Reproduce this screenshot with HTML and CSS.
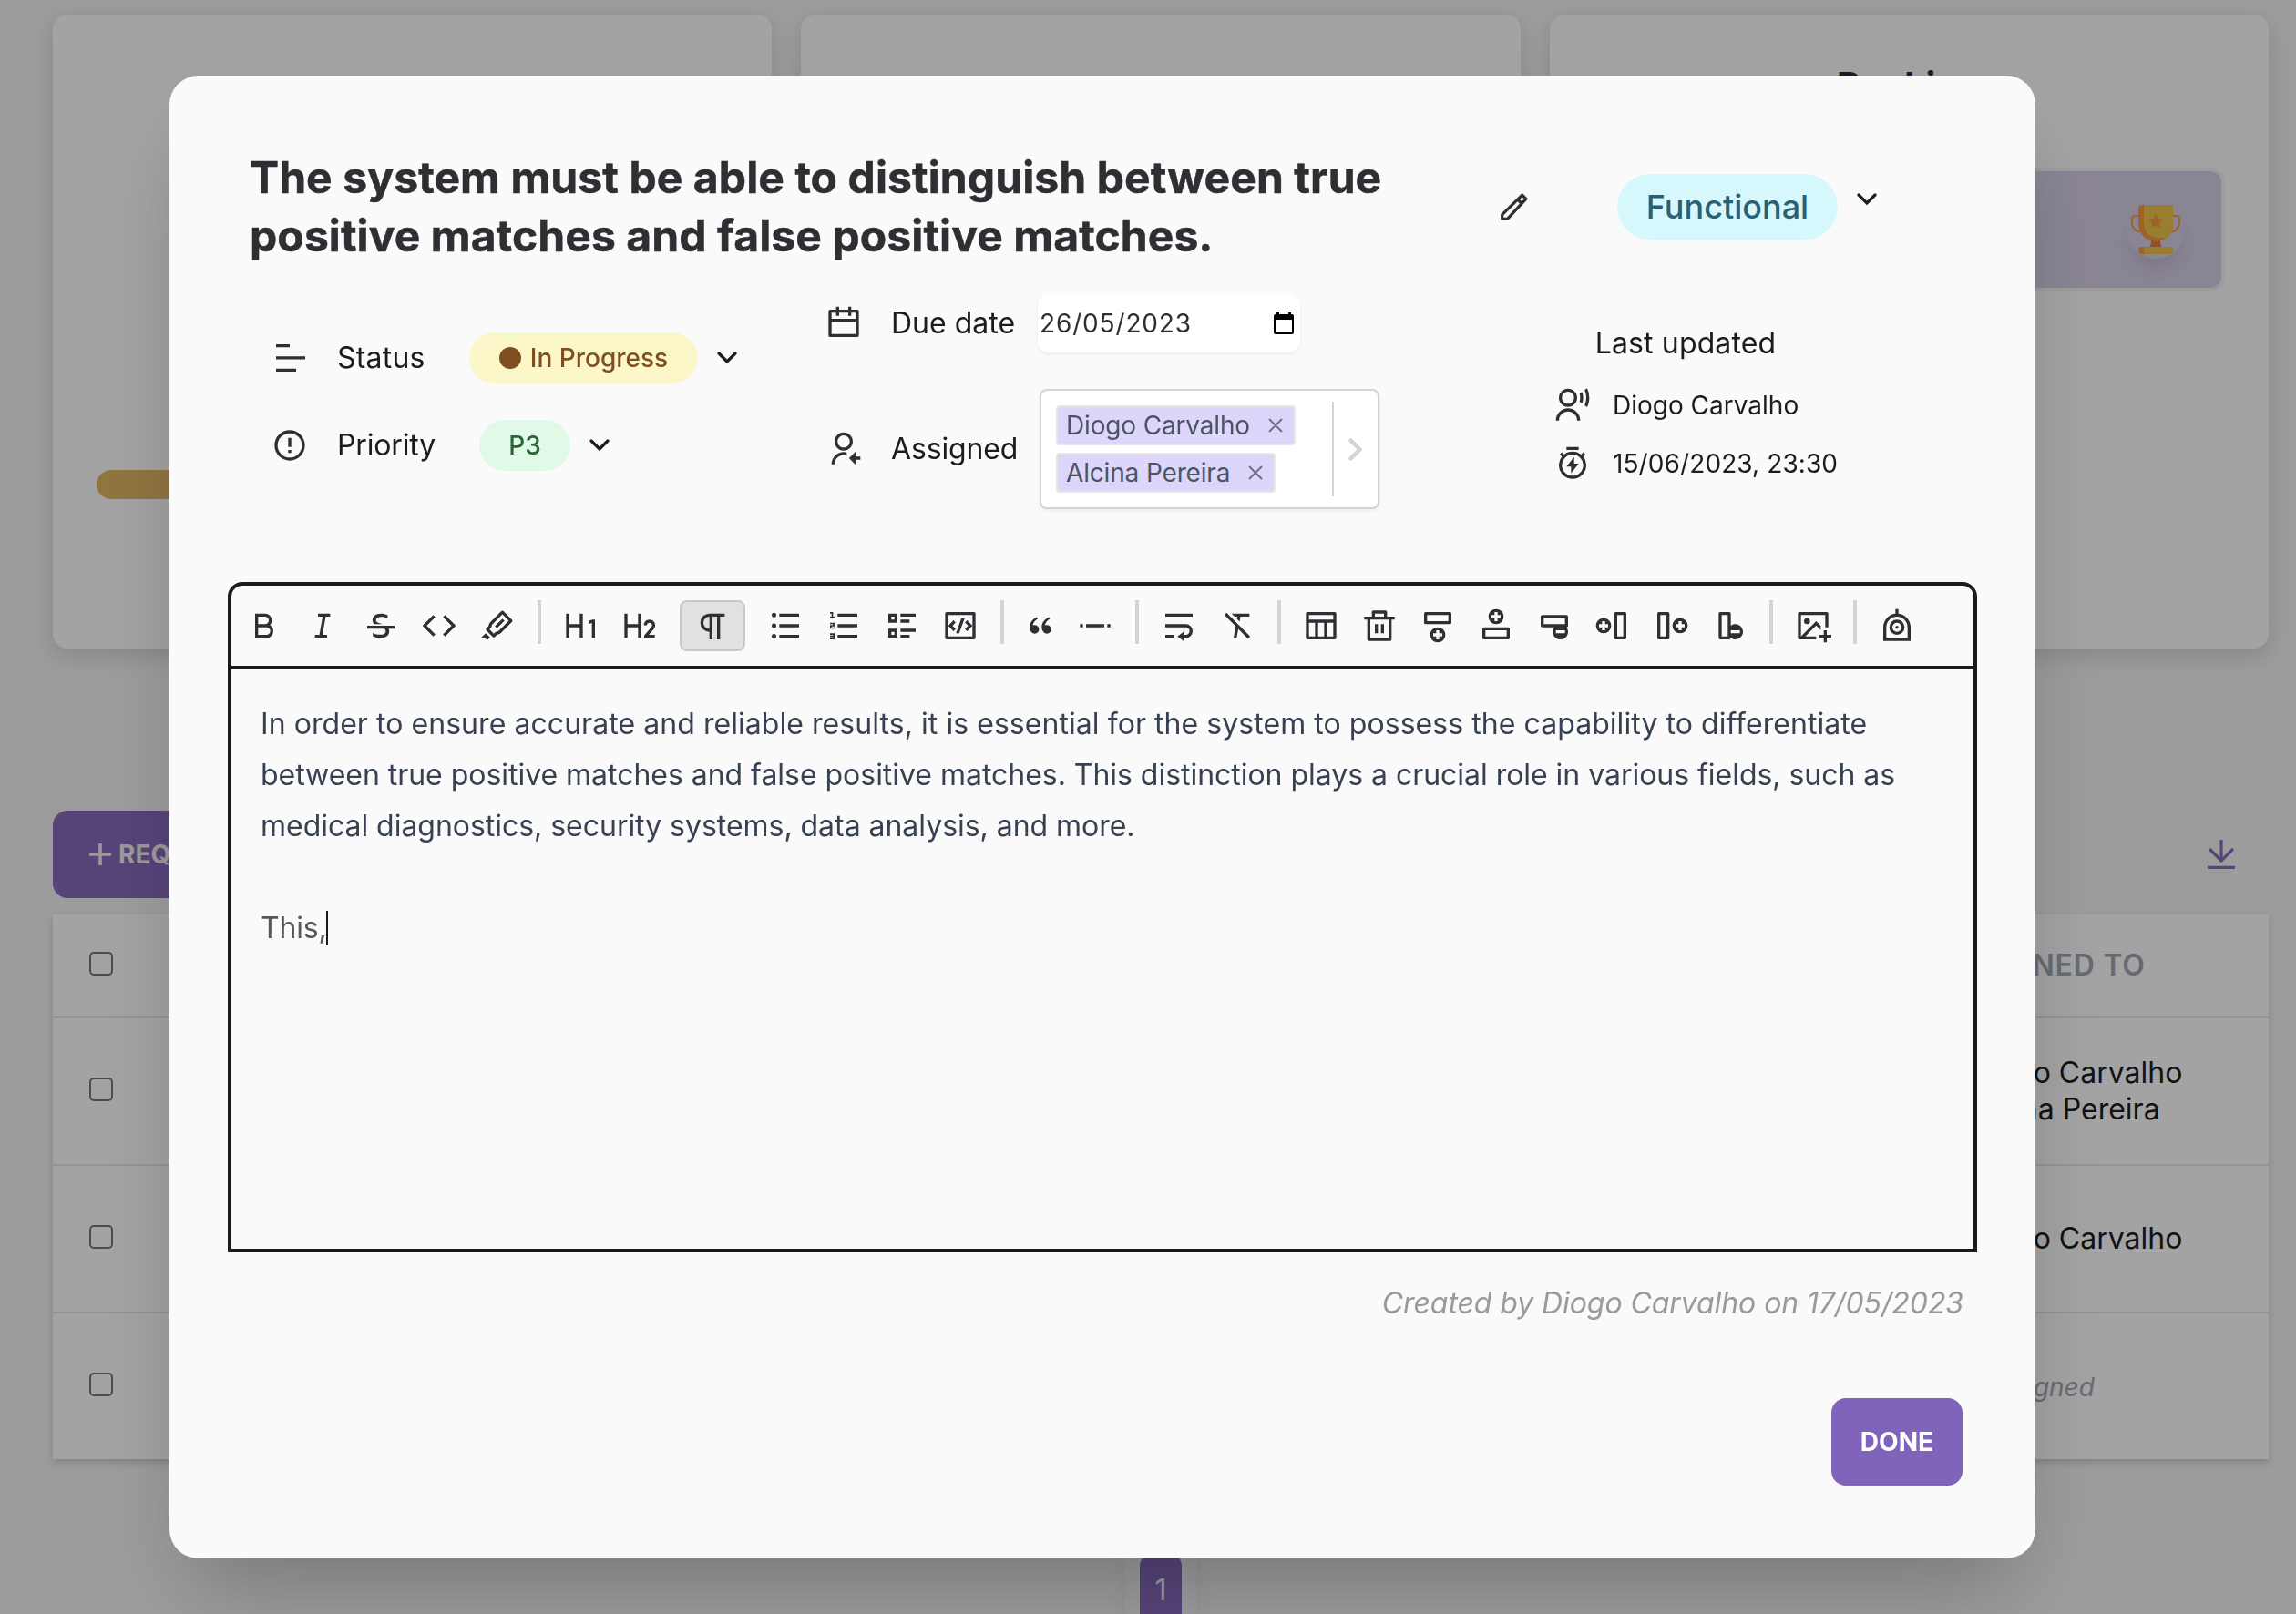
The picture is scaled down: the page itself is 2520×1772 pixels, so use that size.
FILE: index.html
```html
<!DOCTYPE html>
<html lang="en">
<head>
<meta charset="utf-8">
<title>Requirements</title>
<link rel="stylesheet" href="styles.css">
</head>
<body>
<main class="page">
  <section class="cards">
    <div class="card card-progress"><div class="bar"></div></div>
    <div class="card"></div>
    <div class="card card-ranking">
      <h2 class="card-title">Ranking</h2>
      <div class="rank">
        <span class="trophy">
          <svg width="54" height="54" viewBox="0 0 54 54">
            <path d="M9 12H4a3 3 0 0 0-3 3v4c0 6 4 10.500 10 10.500M45 12h5a3 3 0 0 1 3 3v4c0 6-4 10.500-10 10.500" fill="none" stroke="#f09a42" stroke-width="2"/>
            <path d="M22 38h10v4l2 5H20l2-5z" fill="#e07a3c"/>
            <path d="M12 0h30a4 4 0 0 1 4 4v16c0 12-8 20-19 20S8 32 8 20V4a4 4 0 0 1 4-4z" fill="#f09a42"/>
            <path d="M14 0h28a4 4 0 0 1 4 4v16c0 7-2 12-6 16h-8c-11 0-18-6-18-16z" fill="#edc24a"/>
            <path d="M27 10l2.600 5 5.400.9-3.900 3.900.9 5.500-5-2.500-5 2.500.9-5.500-3.900-3.900 5.400-.9z" fill="#f09a42"/>
            <rect x="8" y="46" width="38" height="8" rx="4" fill="#f09a42"/>
            <rect x="14" y="46" width="32" height="8" rx="4" fill="#edc24a"/>
          </svg>
        </span>
      </div>
    </div>
  </section>

  <div class="actions">
    <button class="btn btn-add">
      <svg width="24" height="24" viewBox="0 0 24 24"><path d="M12 0v24M0 12h24" stroke="currentColor" stroke-width="3.600"/></svg>
      REQUIREMENT
    </button>
    <svg class="download" width="30" height="32" viewBox="0 0 30 32"><path d="M15 0v23M2 10l13 13 13-13M0 30.300h30" fill="none" stroke="currentColor" stroke-width="3.200"/></svg>
  </div>

  <div class="table">
    <div class="row row-head"><span class="box"></span><span class="cell">Assigned to</span></div>
    <div class="row"><span class="box"></span><span class="cell">Diogo Carvalho<br>Alcina Pereira</span></div>
    <div class="row"><span class="box"></span><span class="cell">Diogo Carvalho</span></div>
    <div class="row"><span class="box"></span><span class="cell none">Unassigned</span></div>
  </div>

  <div class="pager"><span class="pager-current">1</span></div>
</main>

<div class="overlay">
  <div class="modal">
    <header class="head">
      <h1 class="title">The system must be able to distinguish between true positive matches and false positive matches.</h1>
      <svg class="pencil" width="30" height="30" viewBox="0 0 30 30"><path d="M1.700 28.300v-4.600L23.700 2.200l4.200 4.200L7.500 28.300zM18.800 7l4.400 4.400" fill="none" stroke="currentColor" stroke-width="3.200" stroke-linejoin="round"/></svg>
      <span class="chip chip-type">Functional</span>
      <svg class="chevron chevron-type" width="22" height="14" viewBox="0 0 22 14"><path d="M2 2l9 9 9-9"/></svg>
    </header>

    <section class="meta">
      <div class="col col-state">
        <div class="field">
          <svg class="icon" viewBox="0 0 40 40"><path d="M5 5h15v3.300H5zM5 18.300h32v3.300H5zM5 31.700h22V35H5z"/></svg>
          <span class="label label-status">Status</span>
          <span class="chip chip-status"><i class="dot"></i>In Progress</span>
          <svg class="chevron" width="22" height="14" viewBox="0 0 22 14"><path d="M2 2l9 9 9-9"/></svg>
        </div>
        <div class="field">
          <svg class="icon" viewBox="0 0 24 24"><path d="M12 22C6.477 22 2 17.523 2 12S6.477 2 12 2s10 4.477 10 10-4.477 10-10 10zm0-2a8 8 0 1 0 0-16 8 8 0 0 0 0 16zm-1-5h2v2h-2v-2zm0-8h2v6h-2V7z"/></svg>
          <span class="label label-priority">Priority</span>
          <span class="chip chip-priority">P3</span>
          <svg class="chevron" width="22" height="14" viewBox="0 0 22 14"><path d="M2 2l9 9 9-9"/></svg>
        </div>
      </div>

      <div class="col col-plan">
        <div class="field">
          <svg class="icon" viewBox="0 0 24 24"><path d="M17 3h4a1 1 0 0 1 1 1v16a1 1 0 0 1-1 1H3a1 1 0 0 1-1-1V4a1 1 0 0 1 1-1h4V1h2v2h6V1h2v2zm-2 2H9v2H7V5H4v4h16V5h-3v2h-2V5zm5 6H4v8h16v-8z"/></svg>
          <span class="label">Due date</span>
          <span class="date">26/05/2023
            <svg width="22" height="24" viewBox="0 0 22 24"><path d="M3 0h3v2h10V0h3v2h1a2 2 0 0 1 2 2v18a2 2 0 0 1-2 2H2a2 2 0 0 1-2-2V4a2 2 0 0 1 2-2h1zM2 8v14h18V8z" fill="#000" fill-rule="evenodd"/></svg>
          </span>
        </div>
        <div class="field">
          <svg class="icon" viewBox="0 0 24 24"><path d="M14 14.252v2.090A6 6 0 0 0 6 22l-2-.001a8 8 0 0 1 10-7.748zM12 13c-3.315 0-6-2.685-6-6s2.685-6 6-6 6 2.685 6 6-2.685 6-6 6zm0-2c2.210 0 4-1.790 4-4s-1.790-4-4-4-4 1.790-4 4 1.790 4 4 4zm8 6h3v2h-3v3.500L15.500 18l4.500-4.500V17z"/></svg>
          <span class="label label-tight">Assigned</span>
          <div class="select">
            <div class="tags">
              <span class="tag">Diogo Carvalho<svg width="16" height="16" viewBox="0 0 16 16"><path d="M1 1l14 14M15 1L1 15"/></svg></span>
              <span class="tag">Alcina Pereira<svg width="16" height="16" viewBox="0 0 16 16"><path d="M1 1l14 14M15 1L1 15"/></svg></span>
            </div>
            <span class="select-arrow"><svg width="15" height="25" viewBox="0 0 15 25"><path d="M2.500 2.500l10 10-10 10"/></svg></span>
          </div>
        </div>
      </div>

      <div class="col col-updated">
        <span class="label updated-title">Last updated</span>
        <div class="info">
          <svg class="icon" viewBox="0 0 24 24"><path d="M1 22a8 8 0 1 1 16 0h-2a6 6 0 1 0-12 0H1zm8-9c-3.315 0-6-2.685-6-6s2.685-6 6-6 6 2.685 6 6-2.685 6-6 6zm0-2c2.210 0 4-1.790 4-4s-1.790-4-4-4-4 1.790-4 4 1.790 4 4 4zM21.548.784A13.942 13.942 0 0 1 23 7c0 2.233-.523 4.344-1.452 6.216l-1.645-1.196A11.955 11.955 0 0 0 21 7c0-1.792-.393-3.493-1.097-5.020L21.548.784zm-3.302 2.400A9.970 9.970 0 0 1 19 7a9.970 9.970 0 0 1-.754 3.816l-1.677-1.220A7.990 7.990 0 0 0 17 7a7.990 7.990 0 0 0-.430-2.596l1.676-1.220z"/></svg>
          <span>Diogo Carvalho</span>
        </div>
        <div class="info">
          <svg class="icon" viewBox="0 0 24 24"><path d="M6.382 5.968A8.962 8.962 0 0 1 12 4c2.125 0 4.078.736 5.618 1.968l1.453-1.453 1.414 1.414-1.453 1.453a9 9 0 1 1-14.064 0L3.515 5.930l1.414-1.414 1.453 1.453zM12 20a7 7 0 1 0 0-14 7 7 0 0 0 0 14zm1-8h3l-5 6.500V14H8l5-6.505V12zM8 1h8v2H8V1z"/></svg>
          <span class="stamp">15/06/2023, 23:30</span>
        </div>
      </div>
    </section>

    <section class="editor">
      <div class="toolbar">
        <span class="tool"><svg class="icon" viewBox="0 0 24 24"><path d="M8 11h4.500a2.500 2.500 0 1 0 0-5H8v5zm10 4.500a4.500 4.500 0 0 1-4.500 4.500H6V4h6.500a4.500 4.500 0 0 1 3.256 7.606A4.498 4.498 0 0 1 18 15.500zM8 13v5h5.500a2.500 2.500 0 1 0 0-5H8z"/></svg></span>
        <span class="tool"><svg class="icon" viewBox="0 0 24 24"><path d="M15 20H7v-2h2.927l2.116-12H9V4h8v2h-2.927l-2.116 12H15z"/></svg></span>
        <span class="tool"><svg class="icon" viewBox="0 0 24 24"><path d="M17.154 14c.23.516.346 1.090.346 1.720 0 1.342-.524 2.392-1.571 3.147C14.880 19.622 13.433 20 11.586 20c-1.640 0-3.263-.381-4.870-1.144V16.600c1.520.877 3.075 1.316 4.666 1.316 2.551 0 3.830-.732 3.839-2.197a2.210 2.210 0 0 0-.648-1.603l-.12-.117H3v-2h18v2h-3.846zm-4.078-3H7.629a4.086 4.086 0 0 1-.481-.522C6.716 9.920 6.500 9.246 6.500 8.452c0-1.236.466-2.287 1.397-3.153C8.830 4.433 10.271 4 12.222 4c1.471 0 2.879.328 4.222.984v2.152c-1.200-.687-2.515-1.030-3.946-1.030-2.480 0-3.719.782-3.719 2.346 0 .42.218.786.654 1.099.436.313.974.562 1.613.75.62.18 1.297.414 2.030.699z"/></svg></span>
        <span class="tool"><svg class="icon" viewBox="0 0 24 24"><path d="M23 12l-7.071 7.071-1.414-1.414L20.172 12l-5.657-5.657 1.414-1.414L23 12zM3.828 12l5.657 5.657-1.414 1.414L1 12l7.071-7.071 1.414 1.414L3.828 12z"/></svg></span>
        <span class="tool"><svg class="icon" viewBox="0 0 24 24"><path d="M15.243 4.515l-6.738 6.737-.707 2.121-1.040 1.041 2.828 2.829 1.040-1.041 2.122-.707 6.737-6.738-4.242-4.242zm6.364 3.535a1 1 0 0 1 0 1.414l-7.779 7.779-2.120.707-1.415 1.414a1 1 0 0 1-1.414 0l-4.243-4.243a1 1 0 0 1 0-1.414l1.414-1.414.707-2.121 7.779-7.779a1 1 0 0 1 1.414 0l5.657 5.657zm-6.364-.707l1.414 1.414-4.950 4.950-1.414-1.414 4.950-4.950zM4.283 16.890l2.828 2.829-1.414 1.414-4.243-1.414 2.829-2.829z"/></svg></span>
        <span class="divider"></span>
        <span class="tool"><svg class="icon" viewBox="0 0 24 24"><path d="M13 20h-2v-7H4v7H2V4h2v7h7V4h2v16zm8-12v12h-2v-9.796l-2 .536V8.670L19.500 8H21z"/></svg></span>
        <span class="tool"><svg class="icon" viewBox="0 0 24 24"><path d="M4 4v7h7V4h2v16h-2v-7H4v7H2V4h2zm14.500 4c2.071 0 3.750 1.679 3.750 3.750 0 .857-.288 1.648-.772 2.280l-.148.18L18.034 18H22v2h-7v-1.556l4.820-5.546c.268-.307.43-.709.43-1.148 0-.966-.784-1.750-1.750-1.750-.918 0-1.671.707-1.744 1.606l-.006.144h-2C14.750 9.679 16.429 8 18.500 8z"/></svg></span>
        <span class="tool tool-active"><svg class="icon" viewBox="0 0 24 24"><path d="M12 6v15h-2v-5a6 6 0 1 1 0-12h10v2h-3v15h-2V6h-3zm-2 0a4 4 0 1 0 0 8V6z"/></svg></span>
        <span class="tool"><svg class="icon" viewBox="0 0 24 24"><path d="M8 4h13v2H8V4zM4.500 6.500a1.500 1.500 0 1 1 0-3 1.500 1.500 0 0 1 0 3zm0 7a1.500 1.500 0 1 1 0-3 1.500 1.500 0 0 1 0 3zm0 6.900a1.500 1.500 0 1 1 0-3 1.500 1.500 0 0 1 0 3zM8 11h13v2H8v-2zm0 7h13v2H8v-2z"/></svg></span>
        <span class="tool"><svg class="icon" viewBox="0 0 24 24"><path d="M8 4h13v2H8V4zM5 3v3h1v1H3V6h1V4H3V3h2zM3 14v-2.500h2V11H3v-1h3v2.500H4v.5h2v1H3zm2 5.500H3v-1h2V18H3v-1h3v4H3v-1h2v-.5zM8 11h13v2H8v-2zm0 7h13v2H8v-2z"/></svg></span>
        <span class="tool"><svg class="icon" viewBox="0 0 24 24"><path d="M11 4h10v2H11V4zm0 4h6v2h-6V8zm0 6h10v2H11v-2zm0 4h6v2h-6v-2zM3 4h6v6H3V4zm2 2v2h2V6H5zm-2 8h6v6H3v-6zm2 2v2h2v-2H5z"/></svg></span>
        <span class="tool"><svg class="icon" viewBox="0 0 24 24"><path d="M3 3h18a1 1 0 0 1 1 1v16a1 1 0 0 1-1 1H3a1 1 0 0 1-1-1V4a1 1 0 0 1 1-1zm1 2v14h16V5H4zm16 7l-3.536 3.536-1.414-1.414L17.172 12 15.050 9.879l1.414-1.415L20 12zM6.828 12l2.122 2.121-1.414 1.415L4 12l3.536-3.536L8.950 9.880 6.828 12zm4.416 5H9.116l3.640-10h2.128l-3.640 10z"/></svg></span>
        <span class="divider"></span>
        <span class="tool tool-small"><svg class="icon" viewBox="0 0 24 24"><path d="M4.583 17.321C3.553 16.227 3 15 3 13.011c0-3.500 2.457-6.637 6.030-8.188l.893 1.378c-3.335 1.804-3.987 4.145-4.247 5.621.537-.278 1.240-.375 1.929-.311 1.804.167 3.226 1.648 3.226 3.489a3.500 3.500 0 0 1-3.500 3.500c-1.073 0-2.099-.49-2.748-1.179zm10 0C13.553 16.227 13 15 13 13.011c0-3.500 2.457-6.637 6.030-8.188l.893 1.378c-3.335 1.804-3.987 4.145-4.247 5.621.537-.278 1.240-.375 1.929-.311 1.804.167 3.226 1.648 3.226 3.489a3.500 3.500 0 0 1-3.500 3.500c-1.073 0-2.099-.49-2.748-1.179z"/></svg></span>
        <span class="tool"><svg class="icon" viewBox="0 0 24 24"><path d="M2 11h2v2H2v-2zm4 0h12v2H6v-2zm14 0h2v2h-2v-2z"/></svg></span>
        <span class="divider"></span>
        <span class="tool"><svg class="icon" viewBox="0 0 24 24"><path d="M15 18h1.500a2.500 2.500 0 1 0 0-5H3v-2h13.500a4.500 4.500 0 1 1 0 9H15v2l-4-3 4-3v2zM3 4h18v2H3V4zm6 14v2H3v-2h6z"/></svg></span>
        <span class="tool"><svg class="icon" viewBox="0 0 24 24"><path d="M12.651 14.065L11.605 20H9.574l1.350-7.661-7.410-7.410L4.930 3.515 20.485 19.070l-1.414 1.414-6.420-6.420zm-.878-6.535l.27-1.530h-1.800l-2-2H20v2h-5.927L13.500 9.257 11.773 7.530z"/></svg></span>
        <span class="divider"></span>
        <span class="tool"><svg class="icon" viewBox="0 0 24 24"><path d="M4 8h16V5H4v3zm10 11v-9h-4v9h4zm2 0h4v-9h-4v9zm-8 0v-9H4v9h4zM3 3h18a1 1 0 0 1 1 1v16a1 1 0 0 1-1 1H3a1 1 0 0 1-1-1V4a1 1 0 0 1 1-1z"/></svg></span>
        <span class="tool"><svg class="icon" viewBox="0 0 24 24"><path d="M17 6h5v2h-2v13a1 1 0 0 1-1 1H5a1 1 0 0 1-1-1V8H2V6h5V3a1 1 0 0 1 1-1h8a1 1 0 0 1 1 1v3zm1 2H6v12h12V8zm-9 3h2v6H9v-6zm4 0h2v6h-2v-6zM9 4v2h6V4H9z"/></svg></span>
        <span class="tool"><svg class="icon" viewBox="0 0 24 24"><path d="M12 13a5 5 0 1 1 0 10 5 5 0 0 1 0-10zm1 2h-2v1.999L9 17v2l2-.001V21h2v-2.001L15 19v-2l-2-.001V15zm7-12a1 1 0 0 1 1 1v6a1 1 0 0 1-1 1H4a1 1 0 0 1-1-1V4a1 1 0 0 1 1-1h16zM5 5v4h14V5H5z"/></svg></span>
        <span class="tool"><svg class="icon" viewBox="0 0 24 24"><path d="M20 13a1 1 0 0 1 1 1v6a1 1 0 0 1-1 1H4a1 1 0 0 1-1-1v-6a1 1 0 0 1 1-1h16zm-1 2H5v4h14v-4zM12 1a5 5 0 1 1 0 10 5 5 0 0 1 0-10zm1 2h-2v1.999L9 5v2l2-.001V9h2V6.999L15 7V5l-2-.001V3z"/></svg></span>
        <span class="tool"><svg class="icon" viewBox="0 0 24 24"><path d="M20 5a1 1 0 0 1 1 1v6c0 .552-.448 1-1 1 .628.835 1 1.874 1 3 0 2.761-2.239 5-5 5s-5-2.239-5-5c0-1.126.372-2.165 1-3H4c-.552 0-1-.448-1-1V6c0-.552.448-1 1-1h16zm-7 10v2h6v-2h-6zm6-8H5v4h14V7z"/></svg></span>
        <span class="tool"><svg class="icon" viewBox="0 0 24 24"><path d="M20 3a1 1 0 0 1 1 1v16a1 1 0 0 1-1 1h-6a1 1 0 0 1-1-1V4a1 1 0 0 1 1-1h6zm-1 2h-4v14h4V5zM6 7a5 5 0 1 1 0 10A5 5 0 0 1 6 7zm1 2H5v1.999L3 11v2l2-.001V15h2v-2.001L9 13v-2l-2-.001V9z"/></svg></span>
        <span class="tool"><svg class="icon" viewBox="0 0 24 24"><path d="M10 3a1 1 0 0 1 1 1v16a1 1 0 0 1-1 1H4a1 1 0 0 1-1-1V4a1 1 0 0 1 1-1h6zM9 5H5v14h4V5zm9 2a5 5 0 1 1 0 10 5 5 0 0 1 0-10zm1 2h-2v1.999L15 11v2l2-.001V15h2v-2.001L21 13v-2l-2-.001V9z"/></svg></span>
        <span class="tool"><svg class="icon" viewBox="0 0 24 24"><path d="M12 3a1 1 0 0 1 1 1v8c.835-.628 1.874-1 3-1a5 5 0 1 1-3 9c0 .552-.448 1-1 1H6a1 1 0 0 1-1-1V4a1 1 0 0 1 1-1h6zm-1 2H7v14h4V5zm8 10h-6v2h6v-2z"/></svg></span>
        <span class="divider"></span>
        <span class="tool"><svg class="icon" viewBox="0 0 24 24"><path d="M21 15v3h3v2h-3v3h-2v-3h-3v-2h3v-3h2zm.008-12c.548 0 .992.445.992.993V13h-2V5H4v13.999L14 9l3 3v2.829l-3-3L6.827 19H14v2H2.992A.993.993 0 0 1 2 20.007V3.993A1 1 0 0 1 2.992 3h18.016zM8 7a2 2 0 1 1 0 4 2 2 0 0 1 0-4z"/></svg></span>
        <span class="divider"></span>
        <span class="tool"><svg class="icon" viewBox="0 0 24 24"><path fill-rule="evenodd" d="M13 4.050V1h-2v3.050A9 9 0 0 0 3 13v9h18v-9a9 9 0 0 0-8-8.950zM5 20v-7a7 7 0 0 1 14 0v7zM12 8a5 5 0 1 0 0 10 5 5 0 0 0 0-10zm0 2a3 3 0 1 1 0 6 3 3 0 0 1 0-6z"/><circle cx="12" cy="13" r="1"/></svg></span>
      </div>
      <div class="content">
        <p><span class="loose">In order to ensure accurate and reliable results, it is essential for the system to possess the capability to differentiate</span><br><span class="tight">between true positive matches and false positive matches. This distinction plays a crucial role in various fields, such as<br>medical diagnostics, security systems, data analysis, and more.</span></p>
        <p class="typing">This,<span class="caret"></span></p>
      </div>
    </section>

    <p class="created">Created by Diogo Carvalho on 17/05/2023</p>
    <footer class="foot"><button class="btn">DONE</button></footer>
  </div>
</div>
</body>
</html>
```
FILE: styles.css
```css
* { box-sizing: border-box; margin: 0; }

body {
  height: 1772px;
  overflow: hidden;
  background: #f0f0f0;
  color: #1c1c1e;
  font-family: Inter, "Liberation Sans", sans-serif;
  font-size: 32px;
  line-height: 40px;
}

svg { display: block; flex: none; }
.icon { width: 40px; height: 40px; fill: #2e2e33; }

/* Page behind the dialog */
.page { padding: 16px 30px 0 58px; }
.cards { display: grid; grid-template-columns: repeat(3, 1fr); gap: 32px; }
.card {
  height: 696px;
  padding: 48px;
  border-radius: 16px;
  background: #fafafa;
  box-shadow: 0 8px 26px rgba(0, 0, 0, .14);
}
.card-progress { padding-top: 500px; }
.bar { height: 32px; border-radius: 16px; background: #dfb462; }
.card-ranking { padding-top: 54px; }
.card-title { color: #2e2e33; font-size: 40px; line-height: 48px; text-align: center; }
.rank {
  display: flex;
  justify-content: flex-end;
  align-items: center;
  height: 136px;
  margin-top: 66px;
  padding-right: 40px;
  border: 4px solid #f0f0f0;
  border-radius: 16px;
  background: #d5cde4;
}
.trophy {
  display: grid;
  place-items: center;
  width: 64px;
  height: 64px;
  border-radius: 50%;
  box-shadow: 0 16px 24px -6px rgba(0, 0, 0, .12);
}
.actions {
  display: flex;
  justify-content: space-between;
  align-items: center;
  margin-top: 178px;
  padding-right: 37px;
}
.btn {
  display: flex;
  align-items: center;
  gap: 8px;
  height: 96px;
  padding: 0 32px;
  border: 0;
  border-radius: 16px;
  background: #8064bc;
  color: #fff;
  font: 700 28px/40px Inter, "Liberation Sans", sans-serif;
}
.btn-add { padding: 0 40px; background: #8669bb; color: #f0eaf0; }
.download { color: #8669bb; }
.table {
  margin-top: 18px;
  background: #fafafa;
  box-shadow: 0 4px 8px rgba(0, 0, 0, .16);
}
.row {
  display: flex;
  justify-content: space-between;
  align-items: center;
  height: 162px;
  padding-left: 40px;
  border-bottom: 2px solid #e2e2e6;
}
.row:last-child { border-bottom: 0; height: 160px; }
.row-head {
  height: 114px;
  color: #a0a4b0;
  font-weight: 600;
  letter-spacing: .8px;
  text-transform: uppercase;
}
.box { width: 26px; height: 26px; margin-bottom: 4px; border: 2px solid #767676; border-radius: 5px; }
.cell { width: 328px; }
.row-head .cell { width: 361px; }
.none { width: 349px; padding-top: 2px; color: #a0a4b0; font-size: 28px; font-style: italic; }
.pager {
  width: 78px;
  margin: 97px auto 0;
  padding: 8px 16px;
  background: #eef0f2;
  box-shadow: 0 0 24px rgba(0, 0, 0, .06);
}
.pager-current {
  display: block;
  height: 80px;
  border-radius: 12px;
  background: #8669bb;
  color: #f0f0f0;
  line-height: 77px;
  text-align: center;
}

/* Dialog */
.overlay {
  position: fixed;
  inset: 0;
  padding: 83px 0 0 186px;
  background: rgba(0, 0, 0, .35);
}
.modal {
  width: 2048px;
  height: 1628px;
  padding: 80px 64px 0;
  border-radius: 32px;
  background: #fafafa;
  box-shadow: 0 50px 100px -24px rgba(0, 0, 0, .25);
}
.head { display: flex; align-items: center; padding-left: 24px; }
.title {
  width: 1373px;
  padding-right: 80px;
  color: #2e2e33;
  font-size: 48px;
  font-weight: 700;
  letter-spacing: .09px;
  line-height: 64px;
  -webkit-text-stroke: .5px #2e2e33;
}
.pencil { color: #2e2e33; }
.chip { display: flex; align-items: center; font-weight: 500; white-space: nowrap; }
.chip-type {
  justify-content: center;
  width: 242px;
  height: 72px;
  margin-left: 98px;
  border-radius: 36px;
  background: #d6f8fd;
  color: #2b6074;
  font-size: 36px;
}
.chevron { fill: none; stroke: #1c1c1e; stroke-width: 3.2; stroke-linecap: round; }
.chevron-type { margin: 0 0 16px 21px; }

.meta { display: flex; height: 236px; margin-top: 32px; }
.col { display: flex; flex-direction: column; }
.col-state { width: 608px; padding: 42px 0 0 48px; gap: 40px; }
.col-state .chip { justify-content: center; height: 56px; border-radius: 28px; font-size: 28px; margin-left: 48px; }
.col-state .chevron { margin-left: 21px; }
.field { display: flex; align-items: center; }
.label { white-space: nowrap; }
.col-state .label { margin-left: 32px; }
.label-status { width: 97px; letter-spacing: .2px; }
.label-priority { width: 108px; letter-spacing: -.15px; }
.label-tight { letter-spacing: -.15px; }
.col-state .chip-status { width: 251px; gap: 10px; background: #fcf7c9; color: #7f4f20; }
.dot { width: 24px; height: 24px; border-radius: 50%; background: #7f4f20; }
.col-state .chip-priority { width: 100px; background: #e1fae8; color: #2c6439; }

.col-plan { width: 720px; padding-left: 48px; gap: 40px; }
.col-plan .label { width: 161px; margin-left: 32px; }
.date {
  display: flex;
  justify-content: space-between;
  align-items: center;
  width: 288px;
  height: 64px;
  padding: 0 7px 0 2px;
  border-radius: 12px;
  background: #fff;
  color: #2e2e33;
  font-size: 28px;
  letter-spacing: .85px;
  box-shadow: 0 2px 4px rgba(0, 0, 0, .06);
}
.select {
  display: flex;
  width: 373px;
  height: 132px;
  margin-left: 2px;
  border: 2px solid #d1d5db;
  border-radius: 8px;
  background: #fff;
  box-shadow: 0 2px 4px rgba(0, 0, 0, .06);
}
.tags {
  display: flex;
  flex-direction: column;
  align-items: flex-start;
  gap: 8px;
  width: 319px;
  padding: 16px;
}
.tag {
  display: flex;
  align-items: center;
  gap: 20px;
  height: 44px;
  padding: 0 12px 0 9px;
  border: 2px solid #e5e7eb;
  border-radius: 4px;
  background: #ddd6fa;
  color: #4b5563;
  font-size: 28px;
  letter-spacing: -.16px;
}
.tag svg { fill: none; stroke: #6b7280; stroke-width: 2; }
.select-arrow {
  display: flex;
  align-items: center;
  margin: 12px 0;
  padding-left: 16px;
  border-left: 2px solid #d1d5db;
}
.select-arrow svg { fill: none; stroke: #d1d5db; stroke-width: 4.5; stroke-linecap: round; stroke-linejoin: round; }

.col-updated { width: 340px; margin-left: 128px; padding-top: 34px; }
.updated-title { width: 288px; text-align: center; margin-bottom: 28px; letter-spacing: .15px; }
.info { display: flex; align-items: center; gap: 24px; height: 40px; margin-bottom: 24px; font-size: 28px; white-space: nowrap; }
.stamp { letter-spacing: .1px; }

/* Text editor */
.editor {
  height: 736px;
  margin-top: 80px;
  border: 4px solid #1c1c1e;
  border-radius: 16px 16px 0 0;
}
.toolbar {
  display: flex;
  align-items: flex-start;
  gap: 8px;
  height: 92px;
  padding: 16px 8px;
  border-bottom: 4px solid #1c1c1e;
}
.tool { display: grid; place-items: center; width: 56px; height: 56px; flex: none; }
.tool-active { width: 72px; margin: 0 8px; border: 2px solid #c8c8c8; border-radius: 8px; background: #e1e1e1; }
.tool-small { width: 48px; }
.tool-small .icon { width: 32px; height: 32px; }
.divider { width: 4px; height: 48px; margin: 0 8px; background: #d1d5db; }
.content { padding: 32px; line-height: 56px; color: #374151; white-space: nowrap; }
.loose { letter-spacing: .055px; }
.tight { letter-spacing: -.03px; }
.typing { display: flex; align-items: center; margin-top: 56px; color: #58585c; letter-spacing: -.2px; }
.caret { width: 2px; height: 38px; background: #1c1c1e; }
.created { margin: 36px 15px 0 0; color: #9a9a9c; font-style: italic; letter-spacing: -.08px; text-align: right; }
.foot { display: flex; justify-content: flex-end; margin: 84px 16px 0 0; }
```
